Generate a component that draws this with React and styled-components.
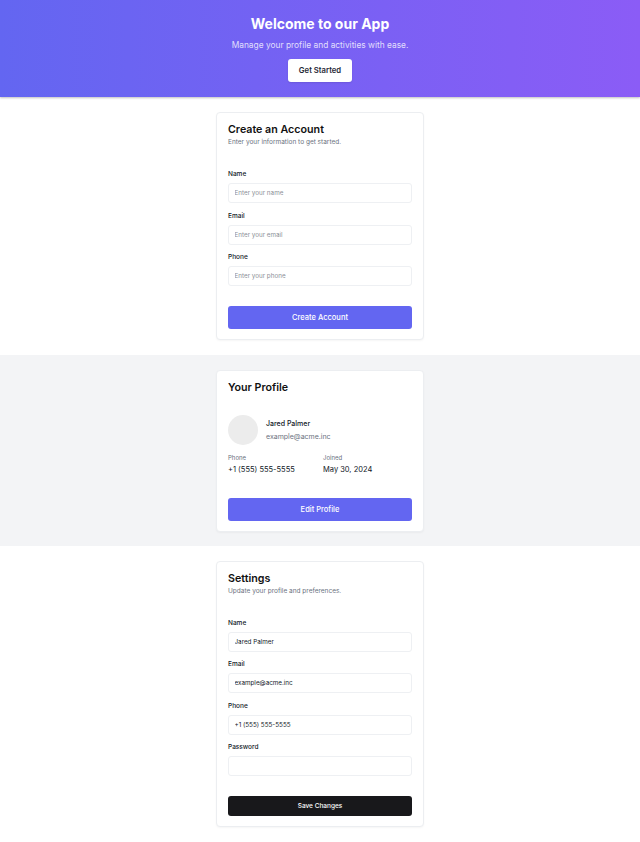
import React from 'react';
import styled, { createGlobalStyle } from 'styled-components';

const GlobalStyle = createGlobalStyle`
  * { box-sizing: border-box; }
  body {
    margin: 0;
    font-family: 'Inter', 'Noto Sans', sans-serif;
    color: #111827;
    background: #ffffff;
  }
`;

const Hero = styled.header`
  height: 97px;
  padding-top: 14px;
  display: flex;
  flex-direction: column;
  align-items: center;
  background: linear-gradient(90deg, #6366f1 0%, #8b5cf6 100%);
  box-shadow: 0 1px 2px rgba(0, 0, 0, 0.25);
  position: relative;
  z-index: 1;
`;

const HeroTitle = styled.h1`
  margin: 0;
  font-size: 14px;
  line-height: 20px;
  font-weight: 700;
  color: #ffffff;
`;

const HeroText = styled.p`
  margin: 5px 0 0;
  font-size: 8.4px;
  line-height: 12px;
  color: rgba(255, 255, 255, 0.8);
`;

const HeroButton = styled.button`
  margin-top: 8px;
  width: 64px;
  height: 23px;
  border: none;
  border-radius: 3px;
  background: #ffffff;
  color: #1f2937;
  font-family: inherit;
  font-size: 7.7px;
  font-weight: 600;
  box-shadow: 0 1px 2px rgba(0, 0, 0, 0.1);
`;

const Section = styled.section`
  padding: ${({ $gray }) => ($gray ? '15px 0 14px' : '15px 0')};
  background: ${({ $gray }) => ($gray ? '#f3f4f6' : '#ffffff')};
  display: flex;
  justify-content: center;
`;

const Card = styled.div`
  width: 208px;
  background: #ffffff;
  border: 1px solid #eceef1;
  border-radius: 4px;
  padding: 10px 11px 10px;
  box-shadow: 0 1px 2px rgba(0, 0, 0, 0.04);
`;

const CardTitle = styled.h2`
  margin: 0;
  font-size: 10.7px;
  line-height: 14px;
  font-weight: 600;
  color: #111111;
`;

const CardText = styled.p`
  margin: 1px 0 0;
  font-size: 6.5px;
  line-height: 9px;
  color: #6b7280;
`;

const Form = styled.div`
  margin-top: 23px;
  display: flex;
  flex-direction: column;
  gap: 8.5px;
`;

const Field = styled.div`
  display: flex;
  flex-direction: column;
  gap: 4px;
`;

const Label = styled.label`
  font-size: 6.5px;
  line-height: 9px;
  font-weight: 500;
  color: #111827;
`;

const Input = styled.input`
  height: 20px;
  width: 100%;
  border: 1px solid #eef0f3;
  border-radius: 3px;
  padding: 0 5.5px;
  font-family: inherit;
  font-size: 6.3px;
  color: #111827;
  background: #ffffff;
  outline: none;
  &::placeholder { color: #8b8f97; }
`;

const Button = styled.button`
  margin-top: ${({ $mt }) => $mt}px;
  width: 100%;
  height: ${({ $h }) => $h}px;
  border: none;
  border-radius: 3px;
  background: ${({ $dark }) => ($dark ? '#18181b' : '#6366f1')};
  color: #ffffff;
  font-family: inherit;
  font-size: ${({ $dark }) => ($dark ? 6.5 : 7.5)}px;
  font-weight: 500;
`;

const ProfileRow = styled.div`
  margin-top: 20px;
  display: flex;
  align-items: center;
  gap: 8px;
`;

const Avatar = styled.div`
  width: 30px;
  height: 30px;
  border-radius: 50%;
  background: #ececec;
`;

const Name = styled.div`
  font-size: 7px;
  line-height: 10px;
  font-weight: 500;
  color: #111827;
`;

const Email = styled.div`
  margin-top: 3px;
  font-size: 7px;
  line-height: 10px;
  color: #6b7280;
`;

const InfoGrid = styled.div`
  margin-top: 7.5px;
  display: grid;
  grid-template-columns: 1fr 1fr;
  column-gap: 6px;
`;

const InfoLabel = styled.div`
  font-size: 6px;
  line-height: 9px;
  color: #6b7280;
`;

const InfoValue = styled.div`
  margin-top: 3.5px;
  font-size: 7.5px;
  line-height: 10px;
  color: #111827;
`;

const FormField = ({ label, placeholder, value, type = 'text' }) => (
  <Field>
    <Label>{label}</Label>
    <Input type={type} placeholder={placeholder} defaultValue={value} />
  </Field>
);

export default function App() {
  return (
    <>
      <GlobalStyle />
      <Hero>
        <HeroTitle>Welcome to our App</HeroTitle>
        <HeroText>Manage your profile and activities with ease.</HeroText>
        <HeroButton>Get Started</HeroButton>
      </Hero>

      <Section>
        <Card>
          <CardTitle>Create an Account</CardTitle>
          <CardText>Enter your information to get started.</CardText>
          <Form>
            <FormField label="Name" placeholder="Enter your name" />
            <FormField label="Email" placeholder="Enter your email" />
            <FormField label="Phone" placeholder="Enter your phone" />
          </Form>
          <Button $mt={20} $h={23}>Create Account</Button>
        </Card>
      </Section>

      <Section $gray>
        <Card>
          <CardTitle>Your Profile</CardTitle>
          <ProfileRow>
            <Avatar />
            <div>
              <Name>Jared Palmer</Name>
              <Email>example@acme.inc</Email>
            </div>
          </ProfileRow>
          <InfoGrid>
            <div>
              <InfoLabel>Phone</InfoLabel>
              <InfoValue>+1 (555) 555-5555</InfoValue>
            </div>
            <div>
              <InfoLabel>Joined</InfoLabel>
              <InfoValue>May 30, 2024</InfoValue>
            </div>
          </InfoGrid>
          <Button $mt={22.5} $h={23}>Edit Profile</Button>
        </Card>
      </Section>

      <Section>
        <Card>
          <CardTitle>Settings</CardTitle>
          <CardText>Update your profile and preferences.</CardText>
          <Form>
            <FormField label="Name" value="Jared Palmer" />
            <FormField label="Email" value="example@acme.inc" />
            <FormField label="Phone" value="+1 (555) 555-5555" />
            <FormField label="Password" type="password" />
          </Form>
          <Button $mt={20} $h={20} $dark>Save Changes</Button>
        </Card>
      </Section>
    </>
  );
}
